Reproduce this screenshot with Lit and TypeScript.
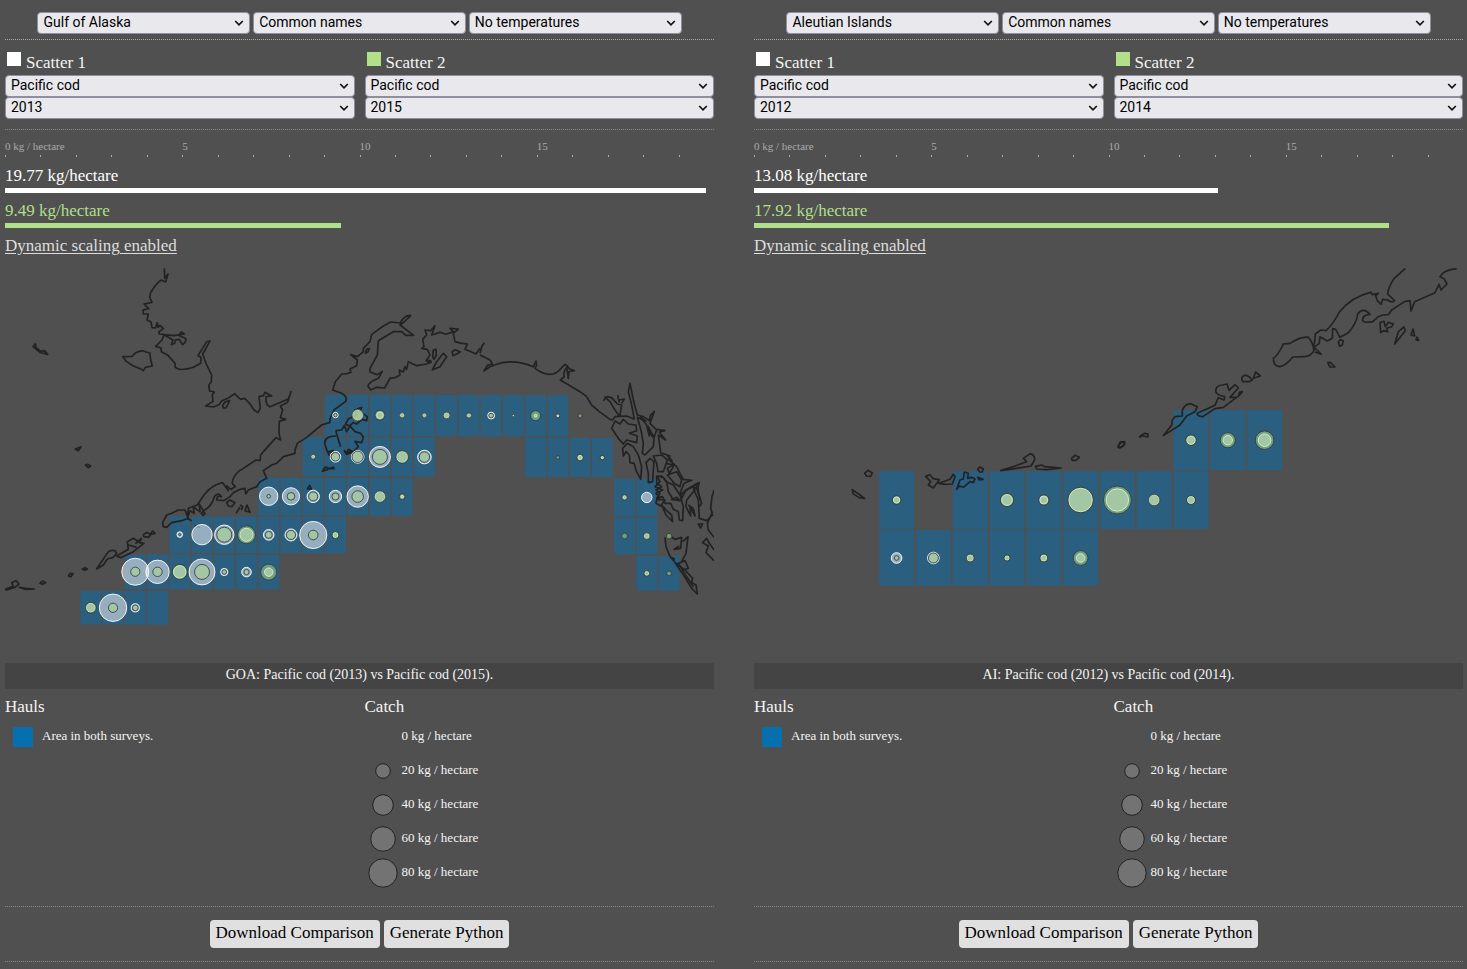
import { LitElement, html, svg, css } from "lit";
import { customElement, property } from "lit/decorators.js";

/** One survey area: column, radius of scatter 1, radius of scatter 2, and whether the area is shaded. */
type Cell = [col: number, first: number, second: number, bare?: boolean];

interface Row {
  top: number;
  bottom: number;
  mid: number;
  cells: Cell[];
}

/** A sheet of coastline, drawn at three units to the map unit from its own corner. */
interface Sheet {
  x: number;
  y: number;
  d: string;
}

interface Region {
  id: string;
  name: string;
  code: string;
  years: [string, string];
  values: [number, number];
  viewBox: string;
  firstCol: number;
  pitch: number;
  cellWidth: number;
  tilt: number;
  rows: Row[];
  coast: Sheet[];
}

const GULF: Region = {
  id: "goa",
  name: "Gulf of Alaska",
  code: "GOA",
  years: ["2013", "2015"],
  values: [19.77, 9.49],
  viewBox: "5 268 709 394",
  firstCol: 90.8,
  pitch: 22.24,
  cellWidth: 20.8,
  tilt: 0.07,
  rows: [
    { top: 394.5, bottom: 435.7, mid: 415, cells: [[11, 2.7, 1.7], [12, 5.3, 5.7], [13, 3.3, 5], [14, 2.2, 2.6], [15, 2, 2.3], [16, 2.9, 3.4], [17, 2.1, 2.5], [18, 3.4, 2.3], [19, 0.7, 1.2], [20, 1.5, 5], [21, 1, 2], [22, 0, 2.1, true]] },
    { top: 437, bottom: 476.2, mid: 456.7, cells: [[10, 1.9, 2.4], [11, 5.3, 4.3], [12, 6.3, 5.7], [13, 10.5, 7.5], [14, 5.6, 6.2], [15, 6.8, 5.2], [20, 0, 0], [21, 0, 1.8], [22, 2.2, 3.3], [23, 1.2, 2.2]] },
    { top: 477.8, bottom: 515.5, mid: 496.4, cells: [[8, 9.2, 1.8], [9, 8.6, 3.8], [10, 6.2, 4.5], [11, 6.2, 3.5], [12, 10.7, 5.8], [13, 5.2, 5.7], [14, 1.3, 3], [24, 2, 2.6], [25, 5.2, 0]] },
    { top: 516.8, bottom: 553.3, mid: 535, cells: [[4, 2.8, 1], [5, 10.2, 0], [6, 9.7, 7.5], [7, 6.5, 9], [8, 5.3, 3.5], [9, 6, 4.6], [10, 13.6, 4.8], [11, 2.6, 3.5], [24, 0, 2.9], [25, 2.8, 3.3], [26, 0, 2.8, true]] },
    { top: 554.9, bottom: 589.6, mid: 572.3, cells: [[2, 13.5, 4.6], [3, 11.7, 4.7], [4, 6.3, 7.5], [5, 13, 7.5], [6, 3.6, 2.3], [7, 4.8, 2.6], [8, 4.2, 8], [25, 2.2, 2.8], [26, 0, 2.4]] },
    { top: 591.6, bottom: 625.2, mid: 608.4, cells: [[0, 4.6, 5.3], [1, 13.7, 4.6], [2, 4.1, 2.9], [3, 0, 0]] },
  ],
  coast: [
    { x: 0, y: 260, d: "M493 25L494 55 504 42 497 66 484 60Q470 68 452 98L449 112 456 127 432 132 446 146 429 150 430 162 445 162 441 180 453 186 456 203 466 204 472 188 474 202 480 196 490 206 476 216 478 222 520 227 553 222 544 216 536 226 558 236 556 246 548 254 537 238 526 240 524 250 514 254 519 240 492 224 486 240 467 259 483 264 484 275 504 286 525 310 526 322Q540 335 580 322L602 310 603 292 594 287 620 245 630 243 608 282 618 310 635 345 634 365 626 375 629 393 643 396 637 404 639 424 617 438 640 441 657 434 665 423 687 413 704 401 720 417M368 290L397 289Q405 275 428 272L450 280 452 300 457 318 436 322 430 332 421 326 400 318 380 305ZM99 260L106 251 108 262 122 274 134 272 143 283 120 277ZM668 436L675 426 689 422 678 444 670 444ZM226 567L243 560 235 572Z" },
    { x: 240, y: 300, d: "M0 298L14 295Q30 308 42 330L54 338 61 325 57 290 70 287 75 277 95 288 78 290Q76 315 90 320L145 297 153 275 143 307 121 318 128 330 121 353 137 358 118 364 117 400 122 420 108 413 70 455 62 465 60 482 48 480 0 512M513 46Q500 45 490 55L480 69 452 66 430 78 395 103 390 125 370 145 370 155 352 170 332 164 352 180 350 197 330 207 333 217 318 222 305 222 286 245 278 270 305 280Q325 292 316 305L282 330 270 355 270 367 245 375 200 412 172 430 165 450 165 460 130 470 110 490 95 495 70 512 80 535 60 545 50 560 25 570 17 582 15 565 0 568M513 46L492 66 480 75 521 106 497 106 485 95 460 95 415 122 412 165 390 205 390 216 412 224 427 214 415 235Q385 248 384 258L392 270 410 262 434 264 450 235 468 232 480 225 478 210 490 216 495 200 500 208 505 185 530 197 560 192 572 182 558 182 570 165 562 148 545 145 552 140 548 118 560 105 555 90 572 92 585 77 575 105 600 97 618 103 640 95 630 85 655 87 640 100 645 125 665 130 682 132 675 148 700 158 708 162 720 145M578 170L580 150 588 148 589 165 582 178ZM577 210L590 185 610 160 620 170 600 200ZM636 155L646 149 661 156 639 167ZM376 160L380 148 388 146 384 156ZM560 180L574 186 566 190ZM317 372L325 357 350 345 345 330 365 322 360 335 382 350 380 362 366 358 350 372 340 368 328 378ZM290 402L288 392 305 390 313 376 320 395 330 378 345 395 362 400 370 412 365 428 345 424 355 440 340 455 325 448 320 462 312 450M302 440L290 402 298 430M288 408Q254 408 254 430L262 455 270 470 284 455M266 455L280 452 274 460ZM314 455L338 457 320 463ZM247 514L254 502 264 503 262 509ZM266 506L280 501 282 506ZM202 567L209 556 214 567Z" },
    { x: 480, y: 300, d: "M0 160L5 140 13 128M0 165L20 175 30 180 37 192 22 196 12 213 30 200 45 194Q100 175 160 200L168 183 170 195 165 205Q215 242 245 203L255 193 262 198 268 206 283 212 267 215 265 235 260 203Q248 215 253 230L241 240 300 275 320 290 335 315 358 335 390 358 398 360 405 350 440 348 463 358M420 346L425 315 412 312 395 293 380 290 370 302M373 290L390 305 405 330 418 348M413 285L418 308M425 310L433 297 418 300M463 358L455 315 445 275 450 250 460 300 472 345 490 350 508 362 512 345 523 334 510 370 530 390 523 410 510 395 505 380 520 410M530 388L555 392 538 396 557 420 535 405 542 458 570 468 565 478 590 500 600 520 610 538 635 541 612 550 600 580 605 595 618 570 655 548 635 560 650 565 662 600M395 385L405 363 420 372 430 358 445 372 468 375 470 392 448 400 472 408 470 428 440 420 430 432 415 415ZM430 468L428 445 442 430 460 440 475 465 485 500 482 538 470 515 462 490 450 488 448 465 438 455ZM472 352L480 380 485 400 490 430 487 460 495 465 520 440 522 415 505 395 500 375 488 360ZM498 488L510 475 522 485 520 510 518 545 505 548 505 520ZM520 468L545 465 562 480 550 515 534 515 530 490ZM560 465L575 480 580 500 568 520 562 505 578 495 560 490M575 540L562 525 590 515 605 540 600 560 582 550ZM530 530L545 528 560 545 565 575 580 600M532 530L540 545 525 560 548 570 528 580 540 595M480 350L500 365M500 375L508 410" },
    { x: 560, y: 440, d: "M290 108L310 112 318 125 340 135 360 165 370 200 368 242 358 240 355 215 340 208 332 190 315 190 308 170 290 175 300 160 288 150 305 140 290 130ZM290 178L315 180 302 198 288 190ZM305 195L320 212 335 225 338 245 318 225ZM335 178L350 172 360 182ZM360 165L380 150 395 142 418 128 400 155 380 180 378 200 392 228 390 200 405 228 400 205 385 195M418 130Q408 145 425 190L418 200M400 145L415 180 418 235 440 242 458 225 452 205 456 170 462 150M458 215L442 250 445 270 462 292M462 330L448 310 440 295 428 308 445 318 438 338 462 362M415 252L428 252 422 264ZM315 292L318 320 330 350 345 358M335 292L345 298 365 292 362 325 342 328 358 318M368 305L384 290 378 340 365 365M330 350L350 372 375 362 385 385 372 390 355 372M345 368L360 390 375 412 395 445 412 462 408 435 395 428 398 415 375 390 350 372M363 383L380 410 400 440" },
    { x: 0, y: 450, d: "M720 60Q696 82 697 100L706 110 693 118 680 108 685 122 668 98Q635 105 612 135L592 165 565 175 562 205 575 212M720 118L700 128 690 140 672 152 650 150Q650 135 664 140Q655 125 643 140Q635 170 610 182L598 163 600 185 590 178 580 170 582 190 570 182 563 203M488 218L500 195 515 190 535 180 555 180 565 205 545 212 515 218 500 232 490 230ZM604 190L610 184 615 191 609 196ZM290 357L308 330 325 305Q345 295 350 310L340 322 322 327 310 345ZM350 318L385 298 382 275 400 265 412 272 408 280 424 265 418 278 432 280 400 305 362 323ZM385 285L410 292M430 254L440 247 452 254 446 262 432 260ZM450 253L458 243 465 250ZM247 357L255 353 262 357 254 361ZM205 378L211 370 219 371 213 380ZM120 400L128 393 137 398 127 403ZM15 418L40 408 35 398 48 392 57 402 45 412 20 420ZM58 412L75 415 103 417 75 418ZM256 45L264 43 272 48 265 53ZM228 0L236 1M680 158L690 150 705 158 695 170 685 168ZM584 228L600 232M708 190L720 172" },
    { x: 240, y: 450, d: "M0 165L8 170 4 180M15 182L21 165 30 187Z" },
  ],
};

const ALEUTIANS: Region = {
  id: "ai",
  name: "Aleutian Islands",
  code: "AI",
  years: ["2012", "2014"],
  values: [13.08, 17.92],
  viewBox: "754 268 709 394",
  firstCol: 896.6,
  pitch: 36.8,
  cellWidth: 34.8,
  tilt: 0,
  rows: [
    { top: 410.2, bottom: 470.1, mid: 440.2, cells: [[8, 4.2, 5.3], [9, 4.7, 7.6], [10, 6.3, 9.3]] },
    { top: 471.1, bottom: 529.1, mid: 500, cells: [[0, 3.2, 4.3], [2, 0, 0], [3, 5.4, 6.7], [4, 4, 5.2], [5, 11.8, 12.8], [6, 11.2, 14], [7, 5.2, 5.7], [8, 3.7, 4.4]] },
    { top: 530, bottom: 585.7, mid: 558, cells: [[0, 5.3, 2.3], [1, 5.8, 5], [2, 3.3, 4], [3, 2.4, 3], [4, 3.1, 4], [5, 4.3, 7.4]] },
  ],
  coast: [
    { x: 1090, y: 260, d: "M946 25L912 56Q895 80 893 102L914 122Q905 130 893 120L878 118 873 133 862 122 857 107 865 100 848 104 842 97Q785 110 748 156Q730 192 708 212L692 210 676 222 674 245 670 262M1100 26Q1060 30 1050 50L1062 56 1071 72 1053 90 1047 73 1035 98 974 125 963 153 960 122 945 124 905 150 895 164 878 165 865 170 848 185Q822 190 818 182 816 165 840 163 820 140 803 162 800 190 775 218L750 232 737 208 728 206 727 235 712 243 690 230 688 250 672 262 694 283 674 276M580 252L600 250Q635 228 655 232Q668 245 672 270 665 290 640 290L608 291Q590 315 570 320 550 320 550 295 565 285 580 252ZM745 246L751 239 760 242 757 255 749 259ZM713 308L722 308 735 321 720 321ZM870 188L882 184 886 200 895 187 910 192 905 200 890 205 893 215 880 212 872 218ZM914 252L925 215 942 201 946 212ZM963 225L969 207 974 228ZM978 240L981 231 986 241ZM455 355Q460 340 477 350L487 360 477 365 458 365ZM490 355L497 336 511 348ZM377 393Q378 375 398 375L411 372 417 391 435 374 445 384 420 412 440 412 400 442 375 446 338 470Q320 468 322 460L375 436 385 413 402 420 404 410Q378 405 377 393ZM444 410L449 396 457 395ZM220 527L245 495 247 480 255 470 277 468 277 450Q285 432 302 431L322 440 315 455 290 468 270 495ZM152 527L164 520 174 522 174 531ZM85 558L94 546 104 548 99 558 88 563Z" },
    { x: 840, y: 400, d: "M482 212L520 200 560 185 550 175 571 161Q585 165 584 180L573 198 530 205ZM587 199L605 195 615 200 663 204 620 209 590 207ZM694 176L705 166 718 172 708 181 697 181ZM834 142L840 127 853 125 854 134 842 143ZM898 108L902 114M74 220L84 211 97 219 92 229 79 228ZM37 269L60 285 74 295 57 293 39 281ZM257 229L270 224 280 236 298 239 290 250 280 264 265 255 272 245ZM296 250L318 242 330 238 340 223 345 230 337 252 315 253ZM350 268L360 240 370 237 373 216 385 220 383 235 395 232 405 237 400 248 390 245 370 262 358 258ZM413 208L419 201 430 206 427 216 419 216ZM413 232L429 238 417 240Z" },
  ],
};

const LEGEND = [
  { amount: 0, r: 0 },
  { amount: 20, r: 7.3 },
  { amount: 40, r: 10.3 },
  { amount: 60, r: 12.3 },
  { amount: 80, r: 14.2 },
];

const MAX = 20;

@customElement("drop-down")
class DropDown extends LitElement {
  @property() label = "";
  @property() value = "";

  static styles = css`
    :host {
      display: block;
      min-width: 0;
    }
    .field {
      display: grid;
      grid-template-columns: 1fr 20px;
      align-items: center;
    }
    .select {
      grid-area: 1 / 1 / 2 / 3;
      appearance: none;
      box-sizing: border-box;
      width: 100%;
      height: 22px;
      margin: 0;
      padding: 0 20px 2px 5px;
      border: 1px solid #8f8f9d;
      border-radius: 4px;
      background: #e9e9ed;
      color: #000;
      font: 14px/18px Roboto, sans-serif;
    }
    .chevron {
      grid-area: 1 / 2 / 2 / 3;
      width: 10px;
      height: 6px;
      margin-left: 4px;
      pointer-events: none;
      z-index: 1;
    }
  `;

  render() {
    return html`<div class="field">
      <select class="select" aria-label=${this.label}>
        <option selected>${this.value}</option>
      </select>
      <svg class="chevron" viewBox="0 0 10 6" aria-hidden="true">
        <path d="M1.2 1 5 4.8 8.8 1" fill="none" stroke="#111" stroke-width="1.7" />
      </svg>
    </div>`;
  }
}

@customElement("catch-map")
class CatchMap extends LitElement {
  @property({ attribute: false }) region!: Region;

  static styles = css`
    :host {
      display: block;
    }
    .map {
      display: block;
      width: 100%;
    }
    .area {
      fill: #2b5f80;
    }
    .coast {
      fill: none;
      stroke: #222;
      stroke-width: 5;
      stroke-linejoin: round;
    }
    .first {
      fill: #fff;
      fill-opacity: 0.5;
      stroke: #fff;
      stroke-opacity: 0.9;
    }
    .second {
      fill: #b2df8a;
      fill-opacity: 0.5;
      stroke: #333;
      stroke-opacity: 0.8;
    }
  `;

  render() {
    const g = this.region;
    const x = (c: number) => g.firstCol + g.pitch * c;
    const dy = (c: number) => g.tilt * (c - 10);
    return html`<svg class="map" viewBox=${g.viewBox} role="img" aria-label="${g.name} catch map">
      ${g.rows.map((row) =>
        row.cells
          .filter((cell) => !cell[3])
          .map(([c]) => svg`<rect class="area" x=${x(c) - g.cellWidth / 2} y=${row.top + dy(c)} width=${g.cellWidth} height=${row.bottom - row.top} />`)
      )}
      ${g.coast.map((s) => svg`<path class="coast" transform="translate(${s.x} ${s.y}) scale(0.33333)" d=${s.d} />`)}
      ${g.rows.map((row) =>
        row.cells.map(([c, a, b]) => svg`
          ${a ? svg`<circle class="first" cx=${x(c)} cy=${row.mid + dy(c)} r=${a} />` : null}
          ${b ? svg`<circle class="second" cx=${x(c)} cy=${row.mid + dy(c)} r=${b} />` : null}`)
      )}
    </svg>`;
  }
}

@customElement("survey-panel")
class SurveyPanel extends LitElement {
  @property({ attribute: false }) region!: Region;

  static styles = css`
    :host {
      display: block;
      min-width: 0;
    }
    .filters {
      display: grid;
      grid-template-columns: repeat(3, 30%);
      justify-content: center;
      gap: 3px;
      padding: 12px 0 5px;
      border-bottom: 1px dotted #aaa;
    }
    .scatters {
      display: grid;
      grid-template-columns: 1fr 1fr;
      gap: 10px;
      padding: 10px 0;
      border-bottom: 1px dotted #888;
    }
    .name {
      display: flex;
      align-items: flex-start;
      gap: 5px;
      height: 25px;
      padding-left: 2px;
      font-size: 17px;
      line-height: 25px;
    }
    .swatch {
      width: 14px;
      height: 14px;
      margin-top: 2px;
      background: #fff;
    }
    .swatch.green {
      background: #b2df8a;
    }
    .axis {
      display: grid;
      grid-template-columns: repeat(20, 1fr);
      height: 27px;
      font-size: 11px;
      line-height: 32px;
      color: #aaa;
      white-space: nowrap;
    }
    .tick {
      width: 0;
      height: 27px;
      background: linear-gradient(#aaa, #aaa) left bottom / 1px 2px no-repeat;
      padding-right: 1px;
    }
    .metric {
      height: 35px;
      font-size: 17px;
      line-height: 37px;
      color: #fff;
    }
    .metric.green {
      color: #b2df8a;
    }
    .value {
      height: 31px;
    }
    .bar {
      height: 5px;
      background: currentColor;
    }
    .scaling {
      display: block;
      width: fit-content;
      height: 41px;
      font-size: 17px;
      line-height: 37px;
      color: #ddd;
      text-underline-offset: 2px;
    }
    .caption {
      margin-top: 1px;
      height: 26px;
      background: #444;
      text-align: center;
      font-size: 14px;
      line-height: 24px;
    }
    .legend {
      display: grid;
      grid-template-columns: 1fr 1fr;
      gap: 10px;
      height: 217px;
      border-bottom: 1px dotted #888;
    }
    .heading {
      margin: 0;
      font-size: 17px;
      font-weight: 400;
      line-height: 35px;
    }
    .list {
      margin: 0;
      padding: 0;
      list-style: none;
      font-size: 13px;
    }
    .item {
      display: grid;
      grid-template-columns: 37px 1fr;
      height: 34px;
      line-height: 23px;
    }
    .square {
      width: 20px;
      height: 20px;
      margin: 3px 0 0 8px;
      background: #066fb0;
    }
    .dot {
      width: 36px;
      height: 32px;
      margin-top: -3px;
    }
    .dot circle {
      fill: #777;
      fill-opacity: 0.9;
      stroke: #222;
    }
    .actions {
      display: flex;
      justify-content: center;
      gap: 4px;
      padding: 13px 0;
      border-bottom: 1px dotted #888;
    }
    .button {
      height: 28px;
      padding: 0 6px 3px;
      border: 0;
      border-radius: 4px;
      background: #e0e0e0;
      color: #000;
      font: inherit;
      font-size: 17px;
    }
  `;

  private scatter(n: number, tone: string) {
    return html`<div>
      <div class="name"><span class="swatch ${tone}"></span>Scatter ${n}</div>
      <drop-down label="Species" value="Pacific cod"></drop-down>
      <drop-down label="Year" value=${this.region.years[n - 1]}></drop-down>
    </div>`;
  }

  private metric(value: number, tone: string) {
    return html`<div class="metric ${tone}">
      <div class="value">${value.toFixed(2)} kg/hectare</div>
      <div class="bar" style="width:${(value / MAX) * 100}%"></div>
    </div>`;
  }

  render() {
    const { name, code, years, values } = this.region;
    return html`
      <div class="filters">
        <drop-down label="Region" value=${name}></drop-down>
        <drop-down label="Naming" value="Common names"></drop-down>
        <drop-down label="Temperature" value="No temperatures"></drop-down>
      </div>
      <div class="scatters">${this.scatter(1, "")}${this.scatter(2, "green")}</div>
      <div class="axis">
        ${Array.from({ length: MAX }, (_, i) => html`<div class="tick">${i === 0 ? "0 kg / hectare" : i % 5 === 0 ? i : ""}</div>`)}
      </div>
      ${this.metric(values[0], "")} ${this.metric(values[1], "green")}
      <a class="scaling" href="#">Dynamic scaling enabled</a>
      <catch-map .region=${this.region}></catch-map>
      <div class="caption">${code}: Pacific cod (${years[0]}) vs Pacific cod (${years[1]}).</div>
      <div class="legend">
        <section>
          <h2 class="heading">Hauls</h2>
          <ul class="list">
            <li class="item"><span class="square"></span>Area in both surveys.</li>
          </ul>
        </section>
        <section>
          <h2 class="heading">Catch</h2>
          <ul class="list">
            ${LEGEND.map(
              ({ amount, r }) => html`<li class="item">
                <svg class="dot" viewBox="0 0 36 32" aria-hidden="true">${r ? svg`<circle cx="18" cy="16" r=${r} />` : null}</svg>
                ${amount} kg / hectare
              </li>`
            )}
          </ul>
        </section>
      </div>
      <div class="actions">
        <button class="button" type="button">Download Comparison</button>
        <button class="button" type="button">Generate Python</button>
      </div>
    `;
  }
}

@customElement("app-root")
class AppRoot extends LitElement {
  static styles = css`
    :host {
      display: grid;
      grid-template-columns: 1fr 1fr;
      gap: 40px;
      align-items: start;
      box-sizing: border-box;
      min-height: 100vh;
      padding: 0 4px 0 5px;
      background: #505050;
      color: #f4f4f4;
      font-family: "Liberation Serif", serif;
    }
  `;

  render() {
    return [GULF, ALEUTIANS].map((region) => html`<survey-panel .region=${region}></survey-panel>`);
  }
}
